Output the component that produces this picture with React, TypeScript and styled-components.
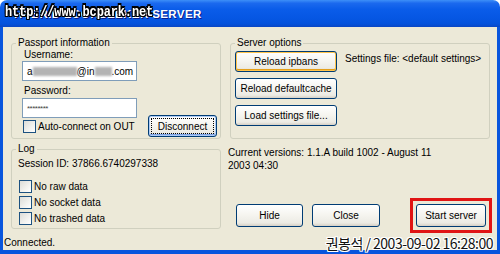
import React from "react";
import styled, { createGlobalStyle } from "styled-components";

const Global = createGlobalStyle`
  body {
    margin: 0;
    background: #ffffff;
  }
`;

const outline = (c: string) =>
  `-1px 0 ${c}, 1px 0 ${c}, 0 -1px ${c}, 0 1px ${c}, -1px -1px ${c}, 1px 1px ${c}, -1px 1px ${c}, 1px -1px ${c}`;

const Window = styled.div`
  position: relative;
  width: 500px;
  height: 254px;
  display: flex;
  flex-direction: column;
  overflow: hidden;
  font-family: "Liberation Sans", Arial, sans-serif;
  font-size: 10px;
  color: #000;
`;

const TitleBar = styled.div`
  height: 27px;
  flex: none;
  display: flex;
  align-items: center;
  padding-left: 14px;
  border-radius: 7px 7px 0 0;
  background: linear-gradient(
    to bottom,
    #3d8ff8 0%,
    #1b69ee 12%,
    #0a5ce9 35%,
    #0657e4 65%,
    #0452dc 88%,
    #0a46c4 100%
  );
`;

const TitleText = styled.span`
  color: #fff;
  font-weight: bold;
  font-size: 11.5px;
  letter-spacing: 0.4px;
  text-shadow: 1px 1px #0a1d8a;
`;

const Body = styled.div`
  flex: 1;
  display: flex;
  flex-direction: column;
  background: #ece9d8;
  border-style: solid;
  border-color: #0855dd;
  border-width: 0 3px 4px 3px;
`;

const Main = styled.div`
  display: grid;
  grid-template-columns: 210px 260px;
  grid-template-rows: 102px 86px;
  column-gap: 9px;
  row-gap: 4px;
  padding: 10px 7px 0 8px;
`;

const Group = styled.fieldset`
  margin: 0;
  padding: 0;
  min-width: 0;
  border: 1px solid #d0d0bf;
  border-radius: 3px;
`;

const Legend = styled.legend`
  margin-left: 4px;
  padding: 0 2px;
  line-height: 12px;
  font-size: 10px;
`;

const Stack = styled.div<{ $pl: number }>`
  display: flex;
  flex-direction: column;
  padding-left: ${(p) => p.$pl}px;
`;

const Label = styled.div<{ $mt?: number }>`
  line-height: 12px;
  margin-left: 2px;
  margin-top: ${(p) => p.$mt ?? 0}px;
`;

const TextBox = styled.div<{ $mt?: number }>`
  box-sizing: border-box;
  width: 115px;
  height: 20px;
  margin-top: ${(p) => p.$mt ?? 0}px;
  background: #fff;
  border: 1px solid #7f9db9;
  display: flex;
  align-items: center;
  padding-left: 4px;
  white-space: nowrap;
`;

const Smudge = styled.span<{ $w: number }>`
  display: inline-block;
  width: ${(p) => p.$w}px;
  height: 9px;
  background: #b4b4b4;
  filter: blur(1.3px);
`;

const Stars = styled.span`
  font-size: 8px;
  letter-spacing: -0.5px;
  color: #444;
`;

const BottomRow = styled.div`
  display: flex;
  align-items: center;
  justify-content: space-between;
  margin-top: -3px;
  padding-right: 3px;
`;

const Check = styled.label<{ $h?: number }>`
  display: flex;
  align-items: center;
  gap: 2px;
  height: ${(p) => p.$h ?? 22}px;
  margin-left: 1px;
`;

const Box = styled.span`
  box-sizing: border-box;
  width: 13px;
  height: 13px;
  border: 1px solid #1c5180;
  background: linear-gradient(135deg, #dcdcd7 0%, #f2f2ef 60%, #ffffff 100%);
`;

const Button = styled.button<{ $w: number; $h: number; $hot?: boolean; $focus?: boolean }>`
  box-sizing: border-box;
  width: ${(p) => p.$w}px;
  height: ${(p) => p.$h}px;
  padding: 0;
  font-family: "Liberation Sans", Arial, sans-serif;
  font-size: 10px;
  color: #000;
  border: 1px solid #003c74;
  border-radius: 3px;
  background: linear-gradient(to bottom, #ffffff 0%, #f6f5f0 45%, #ecebe4 85%, #d6d0c5 100%);
  box-shadow: ${(p) =>
    p.$hot
      ? "inset 0 0 0 1px #ffc44c, inset 0 -1px 0 1px #e5a01a"
      : p.$focus
      ? "inset 0 0 0 1px #aecbf5, inset 0 -1px 0 1px #7ba2e6"
      : "none"};
  outline: ${(p) => (p.$focus ? "1px dotted #000" : "none")};
  outline-offset: -4px;
  flex: none;
`;

const ServerRow = styled.div`
  display: flex;
  gap: 8px;
  padding: 2px 0 0 4px;
`;

const ButtonColumn = styled.div`
  display: flex;
  flex-direction: column;
  gap: 6px;
`;

const SettingsText = styled.div`
  line-height: 12px;
  margin-top: 2px;
  white-space: nowrap;
`;

const SessionText = styled.div`
  line-height: 12px;
  margin-top: 3px;
`;

const CheckList = styled.div`
  display: flex;
  flex-direction: column;
  margin-top: 8px;
`;

const RightBottom = styled.div`
  display: flex;
  flex-direction: column;
`;

const Versions = styled.div`
  line-height: 13px;
  margin: 3px 0 0 -2px;
`;

const ActionRow = styled.div`
  display: flex;
  align-items: center;
  gap: 9px;
  margin-top: auto;
  margin-bottom: -4px;
  padding-left: 6px;
`;

const Highlight = styled.div`
  display: flex;
  margin-left: auto;
  margin-right: -2px;
  padding: 3px;
  border: 3px solid #e01414;
`;

const Status = styled.div`
  margin-top: 7px;
  height: 14px;
  line-height: 14px;
  padding-left: 1px;
`;

const SiteMark = styled.div`
  position: absolute;
  left: 5px;
  top: 5px;
  font-family: "Liberation Mono", "DejaVu Sans Mono", monospace;
  font-weight: bold;
  font-size: 12px;
  letter-spacing: -0.15px;
  color: #fff;
  transform: scaleY(1.2);
  text-shadow: ${outline("#000")};
`;

const StampMark = styled.div`
  position: absolute;
  right: 7px;
  bottom: 3px;
  font-family: "Noto Sans CJK KR", "Liberation Sans", sans-serif;
  font-size: 14px;
  line-height: 16px;
  color: #111;
  letter-spacing: -0.5px;
  text-shadow: ${outline("#fff")};
`;

export default function App() {
  return (
    <Window>
      <Global />
      <TitleBar>
        <TitleText>HYBRID LOOKSEEKER SERVER</TitleText>
      </TitleBar>
      <Body>
        <Main>
          <Group>
            <Legend>Passport information</Legend>
            <Stack $pl={10}>
              <Label>Username:</Label>
              <TextBox>
                a<Smudge $w={44} />@in<Smudge $w={17} />.com
              </TextBox>
              <Label $mt={4}>Password:</Label>
              <TextBox $mt={1}>
                <Stars>********</Stars>
              </TextBox>
              <BottomRow>
                <Check>
                  <Box />
                  Auto-connect on OUT
                </Check>
                <Button $w={69} $h={22} $focus>
                  Disconnect
                </Button>
              </BottomRow>
            </Stack>
          </Group>

          <Group>
            <Legend>Server options</Legend>
            <ServerRow>
              <ButtonColumn>
                <Button $w={102} $h={21} $hot>
                  Reload ipbans
                </Button>
                <Button $w={102} $h={21}>
                  Reload defaultcache
                </Button>
                <Button $w={102} $h={21}>
                  Load settings file...
                </Button>
              </ButtonColumn>
              <SettingsText>Settings file: &lt;default settings&gt;</SettingsText>
            </ServerRow>
          </Group>

          <Group>
            <Legend>Log</Legend>
            <Stack $pl={6}>
              <SessionText>Session ID: 37866.6740297338</SessionText>
              <CheckList>
                {["No raw data", "No socket data", "No trashed data"].map((t) => (
                  <Check key={t} $h={16}>
                    <Box />
                    {t}
                  </Check>
                ))}
              </CheckList>
            </Stack>
          </Group>

          <RightBottom>
            <Versions>
              Current versions: 1.1.A build 1002 - August 11
              <br />
              2003 04:30
            </Versions>
            <ActionRow>
              <Button $w={67} $h={23}>
                Hide
              </Button>
              <Button $w={68} $h={23}>
                Close
              </Button>
              <Highlight>
                <Button $w={70} $h={23}>
                  Start server
                </Button>
              </Highlight>
            </ActionRow>
          </RightBottom>
        </Main>
        <Status>Connected.</Status>
      </Body>
      <SiteMark>http://www.bcpark.net</SiteMark>
      <StampMark>권봉석 / 2003-09-02 16:28:00</StampMark>
    </Window>
  );
}
